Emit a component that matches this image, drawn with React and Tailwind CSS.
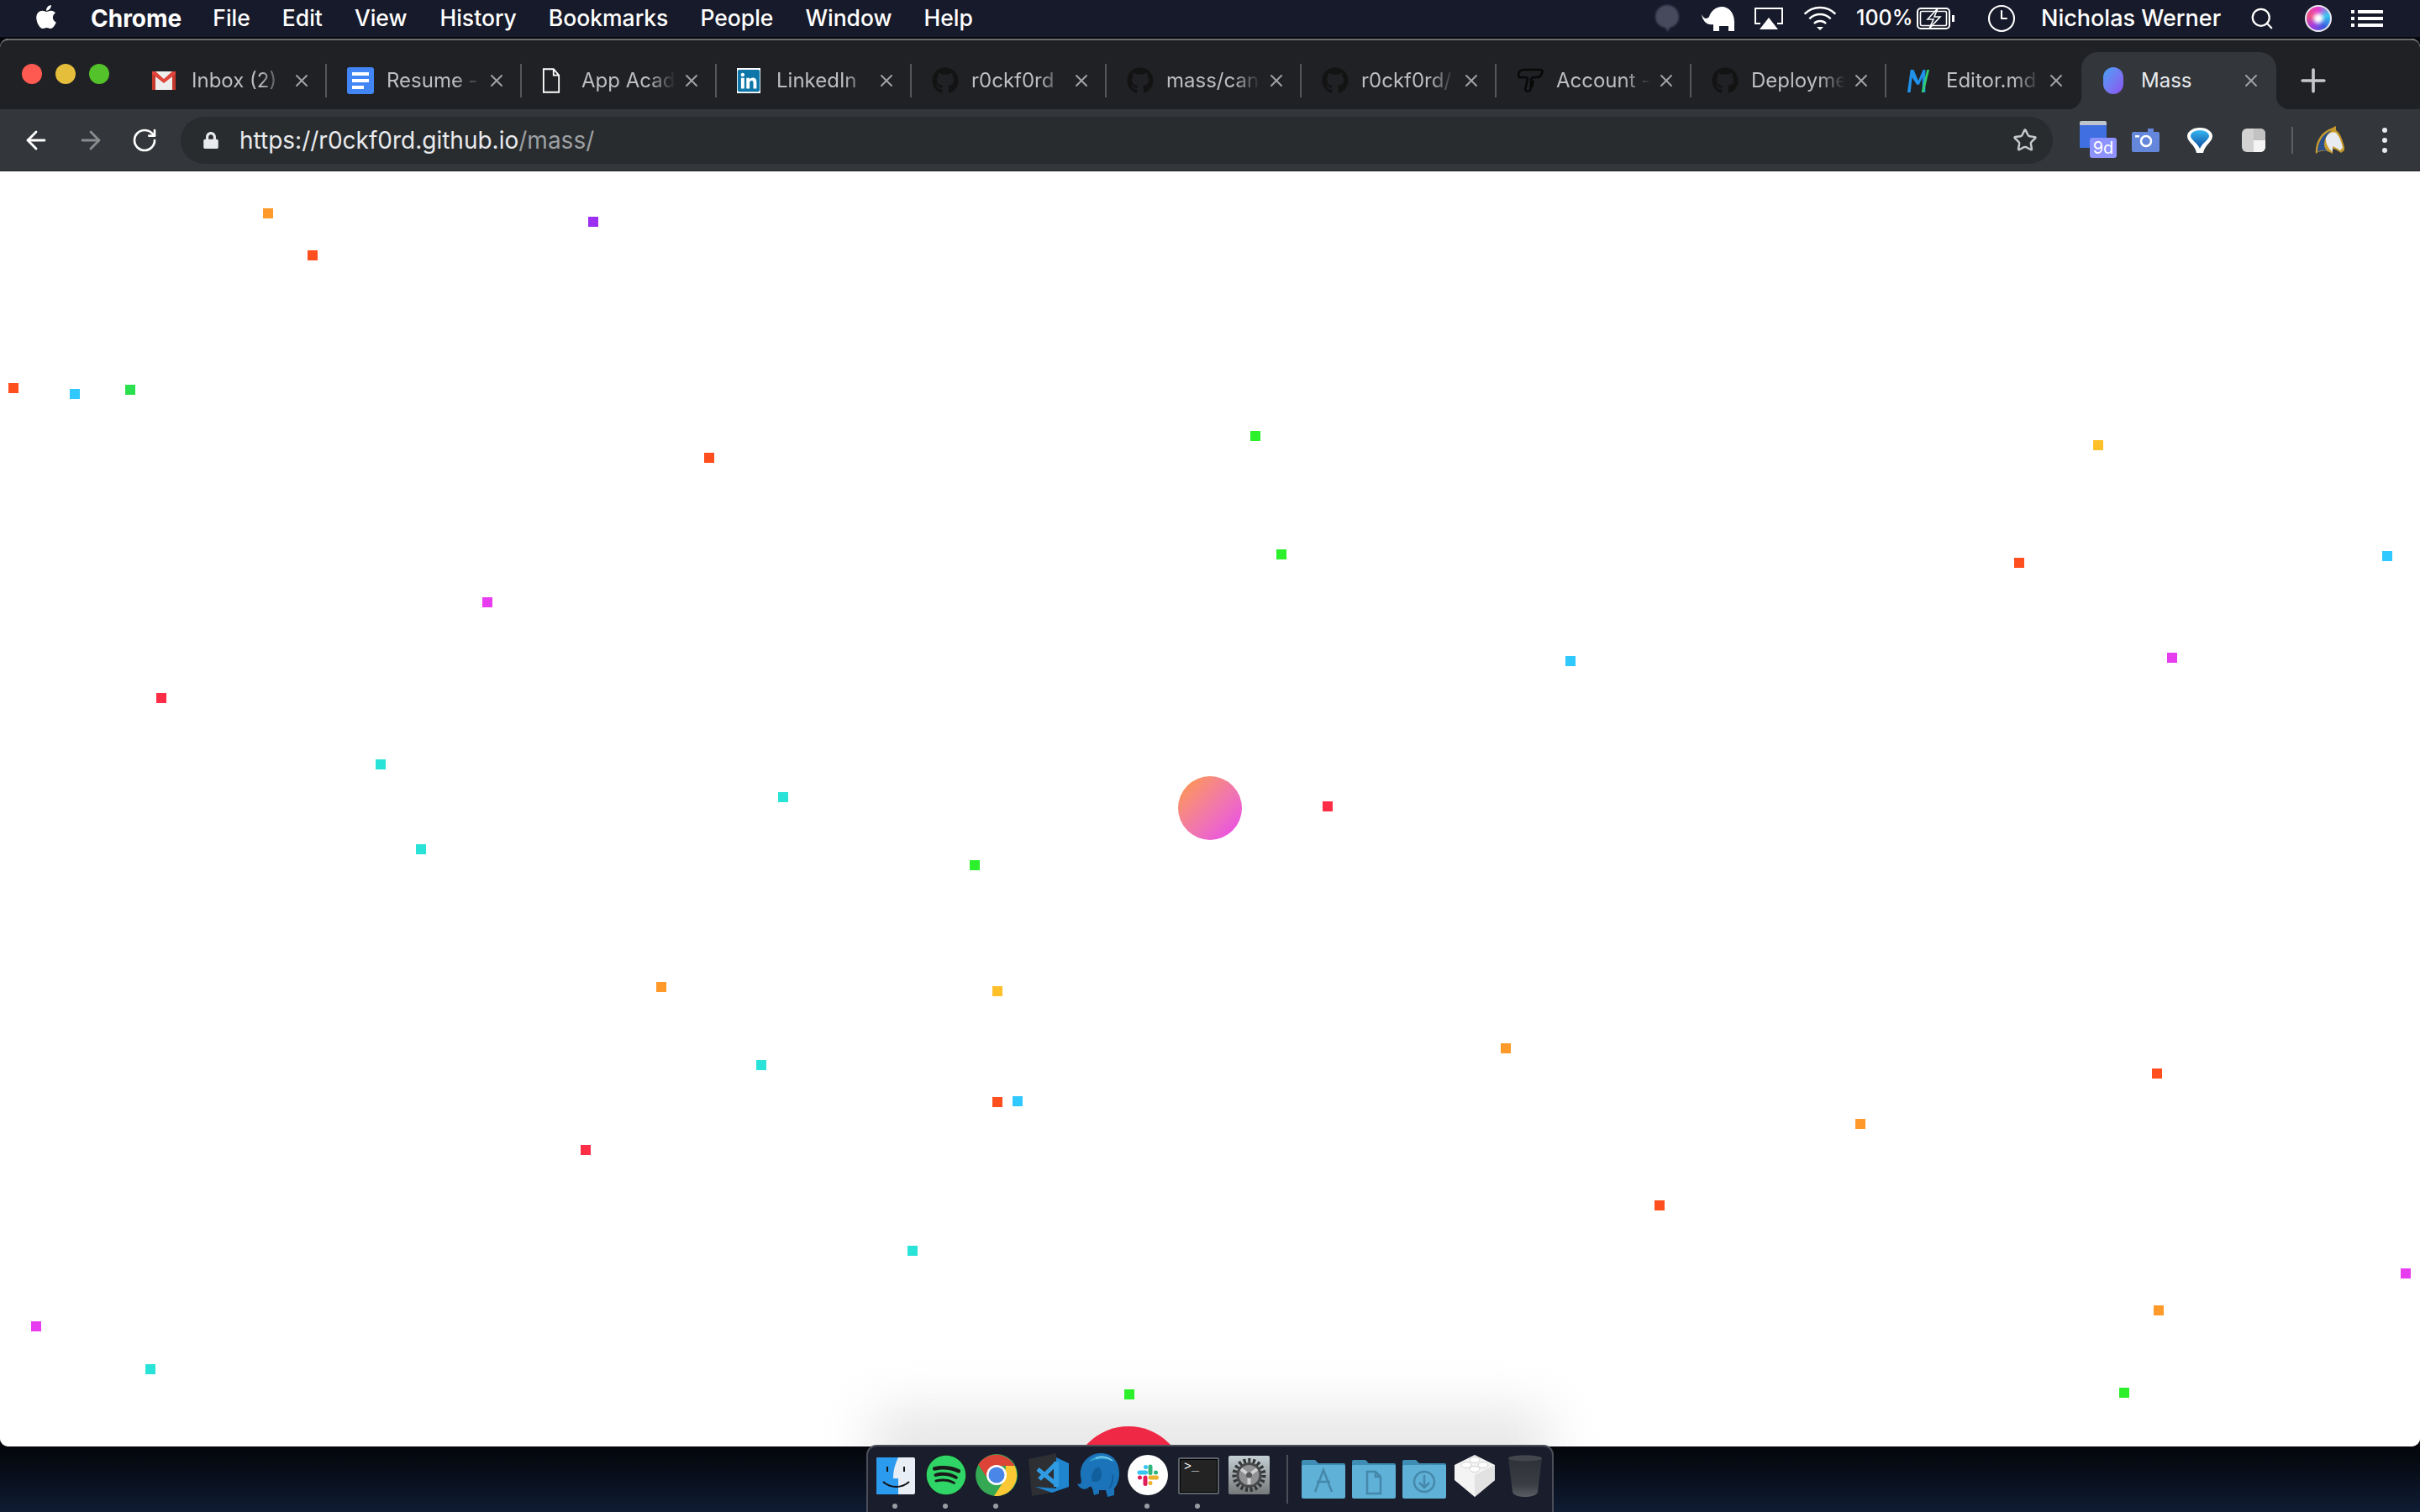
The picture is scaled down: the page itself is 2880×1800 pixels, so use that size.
import { ArrowLeft, ArrowRight, RotateCw, Star, X, Plus, Search, Clock3 } from "lucide-react"
import { FaApple, FaGithub, FaLinkedin, FaLock, FaSpotify } from "react-icons/fa"

const RED = "bg-[#ff2d46]"
const ORANGE_RED = "bg-[#ff4f1f]"
const ORANGE = "bg-[#ff9a2a]"
const YELLOW = "bg-[#ffc02a]"
const GREEN = "bg-[#2cf02c]"
const TEAL = "bg-[#2ae3d8]"
const CYAN = "bg-[#2fc8ff]"
const MAGENTA = "bg-[#e83cf0]"
const PURPLE = "bg-[#9b30f0]"

const particles = [
  [318, 253, ORANGE], [371, 303, ORANGE_RED], [705, 263, PURPLE], [15, 461, ORANGE_RED],
  [88, 468, CYAN], [154, 463, "bg-[#2be04f]"], [843, 544, ORANGE_RED], [1493, 518, GREEN],
  [2496, 529, YELLOW], [1524, 659, GREEN], [2402, 669, ORANGE_RED], [2840, 661, CYAN],
  [579, 716, MAGENTA], [1868, 786, CYAN], [2584, 782, MAGENTA], [191, 830, RED],
  [452, 909, TEAL], [931, 948, TEAL], [1579, 959, RED], [500, 1010, TEAL],
  [1159, 1029, GREEN], [786, 1174, ORANGE], [1186, 1179, YELLOW], [1791, 1247, ORANGE],
  [2566, 1277, ORANGE_RED], [905, 1267, TEAL], [1186, 1311, ORANGE_RED], [1210, 1310, CYAN],
  [2213, 1337, ORANGE], [696, 1368, RED], [1974, 1434, ORANGE_RED], [1085, 1488, TEAL],
  [2862, 1515, MAGENTA], [42, 1578, MAGENTA], [2568, 1559, ORANGE], [178, 1629, TEAL],
  [1343, 1659, GREEN], [2527, 1657, GREEN],
]

const GmailIcon = () => (
  <svg viewBox="0 0 28 28" className="w-[28px] h-[28px]">
    <rect x="0" y="3" width="28" height="22" fill="#eeeeee" />
    <path d="M0 3h4v22H0zM24 3h4v22h-4z" fill="#c5392c" />
    <path d="M0 3h4l10 9 10-9h4v3L14 17 0 6z" fill="#e0443a" />
  </svg>
)

const DocsIcon = () => (
  <svg viewBox="0 0 32 32" className="w-[32px] h-[32px]">
    <rect x="0" y="0" width="32" height="32" rx="3" fill="#4285f4" />
    <path d="M6 6h20v4H6zM6 14h20v4H6zM6 22h14v4H6z" fill="#fff" />
  </svg>
)

const PageIcon = () => (
  <svg viewBox="0 0 24 32" className="w-[22px] h-[32px]" fill="none" stroke="#fff" strokeWidth="2">
    <path d="M2 1h13l7 8v22H2zM15 1v8h7" />
  </svg>
)

const GithubFav = () => <FaGithub className="text-[#131313] w-[32px] h-[32px]" />

const MdIcon = () => (
  <svg viewBox="0 0 30 32" className="w-[28px] h-[32px]">
    <path d="M1 31 5 2h4l6 14 6-14h3v29h-4V12l-4 9h-3L7 12 5 31z" fill="#2090e8" />
    <path d="M19 31 26 2h3l-7 29z" fill="#2fcf6a" />
  </svg>
)

const MassIcon = () => (
  <div className="w-[24px] h-[32px] rounded-full bg-linear-to-br from-[#3aa0f5] to-[#8a4ff0]" />
)

const AccountIcon = () => (
  <svg viewBox="0 0 32 32" className="w-[32px] h-[32px]" fill="none" stroke="#080808" strokeWidth="2.5">
    <path d="M2 10C2 5 5 3 9 3h19c3 0 3 2 2 4-1 3-3 5-6 5h-4c-2 0-3 2-3 5v7c0 4-3 6-6 4-1-1-1-3 0-5l2-9c0-2-2-2-4-2-4 0-7 1-7-2z" />
    <path d="M20 16c-1 3-2 6-2 8" />
  </svg>
)

const tabs = [
  { title: "Inbox (2)", icon: <GmailIcon /> },
  { title: "Resume -", icon: <DocsIcon /> },
  { title: "App Acad", icon: <PageIcon /> },
  { title: "LinkedIn", icon: <FaLinkedin className="text-[#0e76a8] bg-white w-[28px] h-[30px]" /> },
  { title: "r0ckf0rd", icon: <GithubFav /> },
  { title: "mass/can", icon: <GithubFav /> },
  { title: "r0ckf0rd/", icon: <GithubFav /> },
  { title: "Account -", icon: <AccountIcon /> },
  { title: "Deployme", icon: <GithubFav /> },
  { title: "Editor.md", icon: <MdIcon />, last: true },
]

function Tab({ title, icon, last }) {
  return (
    <div className="w-[232px] h-[68px] flex items-center">
      <div className={`w-[232px] h-[40px] flex items-center ${last ? "" : "border-r-2 border-[#55575a]"}`}>
        <div className="w-[71px] pl-[24px] flex items-center">{icon}</div>
        <div className="w-[112px] text-[24px] text-[#bcbec0] whitespace-nowrap [mask-image:linear-gradient(to_right,black_72%,transparent_100%)]">
          {title}
        </div>
        <X className="ml-[7px] text-[#a0a2a4] w-[24px] h-[24px]" strokeWidth={2} />
      </div>
    </div>
  )
}

function MenuBar() {
  return (
    <div className="h-[44px] bg-[#171a2a] flex items-center text-white text-[26.5px] font-medium shrink-0">
      <FaApple className="ml-[40px] w-[30px] h-[32px] -mt-[4px]" />
      <span className="ml-[38px] font-bold text-[28px]">Chrome</span>
      <span className="ml-[37px]">File</span>
      <span className="ml-[38px]">Edit</span>
      <span className="ml-[38px]">View</span>
      <span className="ml-[39px]">History</span>
      <span className="ml-[38px]">Bookmarks</span>
      <span className="ml-[38px]">People</span>
      <span className="ml-[38px]">Window</span>
      <span className="ml-[38px]">Help</span>
      <div className="flex-1" />
      <svg viewBox="0 0 30 34" className="w-[30px] h-[34px] blur-[1px]" fill="#474a5c">
        <path d="M15 1c8 0 14 6 14 14 0 7-5 12-11 13l-2 5-3-5C6 27 1 22 1 15 1 7 7 1 15 1z" />
      </svg>
      <svg viewBox="0 0 40 32" className="ml-[25px] w-[40px] h-[32px]" fill="#fff">
        <path d="M1 11c3 6 6 6 9 3C12 7 18 2 25 2c9 0 15 8 15 18v11h-7v-6H22v6h-7v-8C10 24 3 22 1 11z" />
      </svg>
      <svg viewBox="0 0 36 28" className="ml-[23px] w-[36px] h-[28px]">
        <path d="M8 20H2V2h32v18h-6" fill="none" stroke="#fff" strokeWidth="2" />
        <path d="M18 13 29 27H7z" fill="#fff" />
      </svg>
      <svg viewBox="0 0 42 30" className="ml-[22px] w-[42px] h-[30px]" fill="none" stroke="#fff" strokeWidth="2.4">
        <path d="M2.6 9.6a26 26 0 0 1 36.8 0M8.3 15.3a18 18 0 0 1 25.4 0M13.9 21a10 10 0 0 1 14.2 0" />
        <path d="M17 25h8l-4 4z" fill="#fff" stroke="none" />
      </svg>
      <span className="ml-[22px] text-[25px] w-[62px]">100%</span>
      <svg viewBox="0 0 46 26" className="ml-[10px] w-[46px] h-[26px]">
        <rect x="1" y="1" width="38" height="24" rx="4" fill="none" stroke="#fff" strokeWidth="2" />
        <rect x="4.5" y="4.5" width="31" height="17" rx="1.5" fill="none" stroke="#fff" strokeWidth="1.6" />
        <path d="M42 9h3v8h-3z" fill="#fff" />
        <path d="M25 1 13 14h7l-5 11 13-14h-7l4-10z" fill="#171a2a" stroke="#fff" strokeWidth="1.6" />
      </svg>
      <Clock3 className="ml-[37px] w-[36px] h-[36px]" strokeWidth={1.4} />
      <span className="ml-[29px] w-[218px] whitespace-nowrap text-[27px]">Nicholas Werner</span>
      <Search className="ml-[30px] w-[30px] h-[30px]" strokeWidth={1.8} />
      <div className="ml-[36px] w-[32px] h-[32px] rounded-full border-2 border-[#e8e8f0] bg-[conic-gradient(#e23bd0,#35c7f0,#3c5be0,#a03be0,#f05080,#e23bd0)] flex items-center justify-center">
        <div className="w-[12px] h-[12px] rounded-full bg-white blur-[2px]" />
      </div>
      <svg viewBox="0 0 38 20" className="ml-[23px] mr-[44px] w-[38px] h-[20px]" fill="#fff">
        <path d="M0 0h4v4H0zM8 0h30v4H8zM0 8h4v4H0zM8 8h30v4H8zM0 16h4v4H0zM8 16h30v4H8z" />
      </svg>
    </div>
  )
}

function Toolbar() {
  return (
    <div className="h-[74px] bg-[#33363a] flex items-center shrink-0 border-b border-[#222427]">
      <ArrowLeft className="ml-[26px] w-[34px] h-[34px] text-white" strokeWidth={2} />
      <ArrowRight className="ml-[31px] w-[34px] h-[34px] text-[#8a8c8e]" strokeWidth={2} />
      <RotateCw className="ml-[31px] w-[32px] h-[32px] text-white" strokeWidth={2} />
      <div className="ml-[27px] w-[2228px] h-[56px] rounded-full bg-[#292c2f] flex items-center">
        <FaLock className="ml-[27px] w-[18px] h-[20px] text-[#e8eaed]" />
        <div className="ml-[25px] text-[28px] text-[#e8eaed] whitespace-nowrap">
          https://r0ckf0rd.github.io<span className="text-[#9da0a3]">/mass/</span>
        </div>
        <div className="flex-1" />
        <Star className="mr-[18px] w-[30px] h-[30px] text-[#c5c7c9]" strokeWidth={2} />
      </div>
      <div className="ml-[32px] relative w-[44px] h-[46px]">
        <div className="w-[32px] h-[32px] bg-[#3f6fe0] rounded-t-[2px] border-t-[5px] border-[#c0c4cc]" />
        <div className="absolute left-[12px] top-[20px] w-[32px] h-[24px] rounded-[3px] bg-[#8f93ff] text-white text-[20px] leading-[24px] text-center">
          9d
        </div>
      </div>
      <svg viewBox="0 0 33 28" className="ml-[18px] w-[33px] h-[28px]">
        <path d="M0 6a2 2 0 0 1 2-2h17V0h7v4h5a2 2 0 0 1 2 2v20a2 2 0 0 1-2 2H2a2 2 0 0 1-2-2z" fill="#6487dc" />
        <circle cx="17" cy="15" r="6" fill="none" stroke="#fff" strokeWidth="2.5" />
        <rect x="4" y="8" width="5" height="2.5" fill="#fff" />
      </svg>
      <svg viewBox="0 0 30 32" className="ml-[33px] w-[30px] h-[32px]">
        <defs>
          <linearGradient id="gem" x1="0" y1="0" x2="0" y2="1">
            <stop offset="0" stopColor="#35b6f4" />
            <stop offset="1" stopColor="#0f4f9e" />
          </linearGradient>
        </defs>
        <path d="M15 1c9 0 15 5 15 10 0 7-9 10-11 20h-8C9 21 0 18 0 11 0 6 6 1 15 1z" fill="#fff" />
        <path d="M15 4c6 0 11 3 11 7 0 4-8 8-11 15C12 19 4 15 4 11c0-4 5-7 11-7z" fill="url(#gem)" />
      </svg>
      <div className="ml-[35px] w-[28px] h-[28px] rounded-[6px] bg-[#d2d2d2] overflow-hidden flex justify-end">
        <div className="w-[14px] flex flex-col">
          <div className="h-[14px] bg-[#c2c2c2]" />
          <div className="h-[14px] bg-[#f4f4f4]" />
        </div>
      </div>
      <div className="ml-[31px] w-[2px] h-[32px] bg-[#5c5f62]" />
      <svg viewBox="0 0 37 34" className="ml-[25px] w-[37px] h-[34px]">
        <path d="M2 33C1 20 8 7 20 3l6-3v5c5 3 8 12 10 20v4l-4 3-6-4-4-1v6C17 30 10 27 2 33z" fill="#c79a2c" />
        <path d="M4 31C4 20 10 9 21 5c-6 5-9 11-9 17 0 4 2 7 5 9-4-2-8-3-13 0z" fill="#2a4f8c" />
        <path d="M14 14c3-6 8-8 12-6 4 4 7 12 8 18l-3 3-5-3-4-2v7c-5-4-9-11-8-17z" fill="#e8ecf2" />
      </svg>
      <div className="ml-[44px] flex flex-col gap-[6px]">
        <div className="w-[6px] h-[6px] rounded-full bg-[#e8eaed]" />
        <div className="w-[6px] h-[6px] rounded-full bg-[#e8eaed]" />
        <div className="w-[6px] h-[6px] rounded-full bg-[#e8eaed]" />
      </div>
    </div>
  )
}

const FolderIcon = ({ children }) => (
  <svg viewBox="0 0 52 48" className="w-[52px] h-[48px]">
    <path d="M0 4a2 2 0 0 1 2-2h14l4 4h30a2 2 0 0 1 2 2v8H0z" fill="#3f8db5" />
    <rect x="0" y="8" width="52" height="40" rx="2" fill="#5fb1d8" />
    <g fill="none" stroke="#4688aa" strokeWidth="2.5">{children}</g>
  </svg>
)

const RunDot = ({ className }) => (
  <div className={`absolute top-[68px] w-[6px] h-[6px] rounded-full bg-[#9a9ca4] ${className}`} />
)

function Dock() {
  return (
    <div className="absolute left-[1031px] top-[1720px] w-[818px] h-[90px] rounded-t-[12px] border-2 border-[#4b4e58] bg-[#191d2c] flex pl-[10px]">
      <div className="flex flex-col w-[48px] mr-[11px]">
        <svg viewBox="0 0 46 44" className="mt-[13px] w-[46px] h-[44px]">
          <rect width="46" height="44" rx="2" fill="#e8eef6" />
          <path d="M2 0h24c-4 9-6 15-6 25h6v19H2a2 2 0 0 1-2-2V2a2 2 0 0 1 2-2z" fill="#2b9bf0" />
          <path d="M13 11v6M33 11v6" stroke="#111" strokeWidth="2" />
          <path d="M8 29c9 8 22 8 31 0" stroke="#111" strokeWidth="2" fill="none" />
        </svg>
      </div>
      <div className="w-[48px] mr-[11px]">
        <div className="mt-[10px] w-[48px] h-[48px] rounded-full bg-[#1a1a1a] flex items-center justify-center">
          <FaSpotify className="w-[48px] h-[48px] text-[#2fd566]" />
        </div>
      </div>
      <div className="w-[50px] mr-[13px]">
        <svg viewBox="0 0 50 50" className="mt-[9px] w-[50px] h-[50px]">
          <circle cx="25" cy="25" r="25" fill="#34a853" />
          <path d="M25 14h21.5A25 25 0 0 0 3.3 12.5L15.5 31z" fill="#db4437" />
          <path d="M46.5 14A25 25 0 0 1 22 50l12.5-19L36 14z" fill="#fcc934" />
          <circle cx="25" cy="25" r="12" fill="#fff" />
          <circle cx="25" cy="25" r="9.5" fill="#4a86e8" />
        </svg>
      </div>
      <div className="w-[48px] mr-[8px]">
        <svg viewBox="0 0 48 52" className="mt-[8px] w-[48px] h-[52px]">
          <path d="M0 7 33 0v46L4 51z" fill="#2d2f33" />
          <path d="M33 5 48 12v28L28 47 8 40l25 2z" fill="#1f85cf" />
          <path d="M33 10v30" stroke="#2f9be3" strokeWidth="6" />
          <path d="M32 13 18 27M11 19l21 17M13 31l6-6" stroke="#2f9be3" strokeWidth="5" fill="none" />
        </svg>
      </div>
      <div className="w-[54px] mr-[8px]">
        <svg viewBox="0 0 54 56" className="mt-[6px] w-[54px] h-[56px]">
          <path d="M6 30C4 14 16 2 30 2c14 0 22 10 22 24 0 10-4 16-6 18v8l-8 2-2-8h-8v4l-6 2-2-8c-2-4-4-2-6 0-4 2-10 0-12-6 4 2 6 0 4-8z" fill="#1b74ba" />
          <path d="M16 12C22 5 36 2 46 12c-8-4-20-4-30 0z" fill="#35a0d4" />
          <path d="M24 8c6-3 14-2 20 3" stroke="#7fd0e8" strokeWidth="1.5" fill="none" />
          <path d="M28 18c-6 2-10 8-9 16 2 4 8 2 11-1 2-5 1-10-2-15z" fill="#125f9e" />
          <path d="M40 44c3-4 5-10 4-16" stroke="#125f9e" strokeWidth="2" fill="none" />
        </svg>
      </div>
      <div className="w-[48px] mr-[12px]">
        <svg viewBox="0 0 48 48" className="mt-[10px] w-[48px] h-[48px]">
          <circle cx="24" cy="24" r="24" fill="#fff" />
          <g strokeWidth="5" strokeLinecap="round">
            <path d="M14 21h7.5M21.5 14.5h0" stroke="#36c5f0" />
            <path d="M27 14v7.5M33.5 21h0" stroke="#2eb67d" />
            <path d="M27 27h7.5M27 33.5h0" stroke="#ecb22e" />
            <path d="M21 27v7.5M14.5 27h0" stroke="#e01e5a" />
          </g>
        </svg>
      </div>
      <div className="w-[49px] mr-[11px]">
        <div className="mt-[13px] w-[49px] h-[44px] rounded-[2px] bg-[#232323] border-2 border-[#5a6068] shadow-[inset_0_0_0_1px_#000] pl-[5px] pt-[2px] text-white text-[15px] leading-[16px] font-['Liberation_Mono',monospace]">
          &gt;_
        </div>
      </div>
      <div className="w-[49px] mr-[20px]">
        <svg viewBox="0 0 49 46" className="mt-[11px] w-[49px] h-[46px]">
          <defs>
            <linearGradient id="prefs" x1="0" y1="0" x2="0" y2="1">
              <stop offset="0" stopColor="#c4d0d4" />
              <stop offset="1" stopColor="#77797b" />
            </linearGradient>
          </defs>
          <rect width="49" height="46" rx="2" fill="url(#prefs)" />
          <circle cx="24.5" cy="23" r="17" fill="none" stroke="#333537" strokeWidth="6" strokeDasharray="3 2.6" />
          <circle cx="24.5" cy="23" r="15" fill="#47494b" />
          <circle cx="24.5" cy="23" r="12" fill="#8f9193" />
          <path d="M24.5 23V34M24.5 23 15 16M24.5 23 34 16" stroke="#cfd1d2" strokeWidth="4" />
          <circle cx="24.5" cy="23" r="3.5" fill="#555759" />
        </svg>
      </div>
      <div className="w-[2px] h-[58px] mt-[10px] bg-[#4b4e58] mr-[16px]" />
      <div className="w-[52px] mt-[14px] mr-[8px]">
        <FolderIcon>
          <path d="M16 40 26 14l10 26M18 28h16" />
        </FolderIcon>
      </div>
      <div className="w-[52px] mt-[14px] mr-[8px]">
        <FolderIcon>
          <path d="M18 16h10l6 6v20H18zM28 16v6h6" />
        </FolderIcon>
      </div>
      <div className="w-[52px] mt-[14px] mr-[10px]">
        <FolderIcon>
          <circle cx="26" cy="28" r="12" />
          <path d="M26 20v14M20 29l6 6 6-6" />
        </FolderIcon>
      </div>
      <div className="w-[48px] mr-[16px]">
        <svg viewBox="0 0 48 50" className="mt-[10px] w-[48px] h-[50px]">
          <path d="M24 0 48 12v18L24 50 0 30V12z" fill="#f4f4f4" />
          <path d="M24 24 48 12v18L24 50z" fill="#e2e2e2" />
          <ellipse cx="24" cy="6" rx="6" ry="3.5" fill="#fff" stroke="#d0d0d0" />
          <ellipse cx="14" cy="12" rx="6" ry="3.5" fill="#fff" stroke="#d0d0d0" />
          <ellipse cx="34" cy="12" rx="6" ry="3.5" fill="#fff" stroke="#d0d0d0" />
          <ellipse cx="24" cy="17" rx="6" ry="3.5" fill="#fff" stroke="#d0d0d0" />
        </svg>
      </div>
      <div className="w-[40px]">
        <svg viewBox="0 0 40 50" className="mt-[10px] w-[40px] h-[50px]">
          <defs>
            <linearGradient id="trash" x1="0" y1="0" x2="0" y2="1">
              <stop offset="0" stopColor="#2c3036" />
              <stop offset="0.7" stopColor="#3a3e44" />
              <stop offset="1" stopColor="#5a5e63" />
            </linearGradient>
          </defs>
          <path d="M0 4c8-5 32-5 40 0l-5 40c-1 8-29 8-30 0z" fill="url(#trash)" />
          <ellipse cx="20" cy="4" rx="20" ry="3.5" fill="#43474d" />
        </svg>
      </div>
      <RunDot className="left-[29px]" />
      <RunDot className="left-[89px]" />
      <RunDot className="left-[149px]" />
      <RunDot className="left-[329px]" />
      <RunDot className="left-[389px]" />
    </div>
  )
}

export default function App() {
  return (
    <div className="relative w-[2880px] h-[1800px] overflow-hidden flex flex-col bg-[#06070c] font-['Inter','Liberation_Sans',sans-serif]">
      <MenuBar />
      <div className="mt-[2px] h-[1676px] rounded-[10px] overflow-hidden flex flex-col bg-white shrink-0">
        <div className="h-[84px] bg-[#202124] border-t-2 border-[#68696b] rounded-t-[10px] flex items-end shrink-0">
          <div className="w-[157px] h-[84px] pl-[26px] flex items-center gap-[16px]">
            <div className="w-[24px] h-[24px] rounded-full bg-[#ff5a52]" />
            <div className="w-[24px] h-[24px] rounded-full bg-[#e5bf3c]" />
            <div className="w-[24px] h-[24px] rounded-full bg-[#53c22b]" />
          </div>
          {tabs.map((t) => (
            <Tab key={t.title} title={t.title} icon={t.icon} last={t.last} />
          ))}
          <div className="relative w-[232px] h-[68px] bg-[#33363a] rounded-t-[20px] flex items-center shrink-0">
            <div className="absolute -left-[16px] bottom-0 w-[16px] h-[16px] bg-[radial-gradient(circle_at_0_0,transparent_16px,#33363a_16.5px)]" />
            <div className="absolute -right-[16px] bottom-0 w-[16px] h-[16px] bg-[radial-gradient(circle_at_100%_0,transparent_16px,#33363a_16.5px)]" />
            <div className="w-[71px] pl-[26px] flex items-center">
              <MassIcon />
            </div>
            <div className="w-[112px] text-[24px] text-[#e8eaed]">Mass</div>
            <X className="ml-[7px] text-[#a0a2a4] w-[24px] h-[24px]" strokeWidth={2} />
          </div>
          <div className="h-[68px] flex items-center ml-[22px]">
            <Plus className="w-[44px] h-[44px] text-[#c5c7c9]" strokeWidth={2} />
          </div>
        </div>
        <Toolbar />
        <div className="relative flex-1 bg-white overflow-hidden">
          {/* dock shadow falling on the page */}
          <div className="absolute left-[1040px] top-[1480px] w-[800px] h-[70px] bg-[#e2e2e2] blur-[32px]" />
          <div className="absolute left-[1402px] top-[720px] w-[76px] h-[76px] rounded-full bg-linear-to-br from-[#ff9a2a] to-[#e83cf0]" />
          <div className="absolute left-[1275px] top-[1494px] w-[136px] h-[136px] rounded-full bg-[#ef2845]" />
          {particles.map(([x, y, color]) => (
            <div
              key={`${x}-${y}`}
              className={`absolute w-[12px] h-[12px] ${color}`}
              style={{ left: x - 5, top: y - 209 }}
            />
          ))}
        </div>
      </div>
      <div className="flex-1 bg-linear-to-b from-[#04060a] to-[#0f1c33]" />
      <Dock />
    </div>
  )
}
